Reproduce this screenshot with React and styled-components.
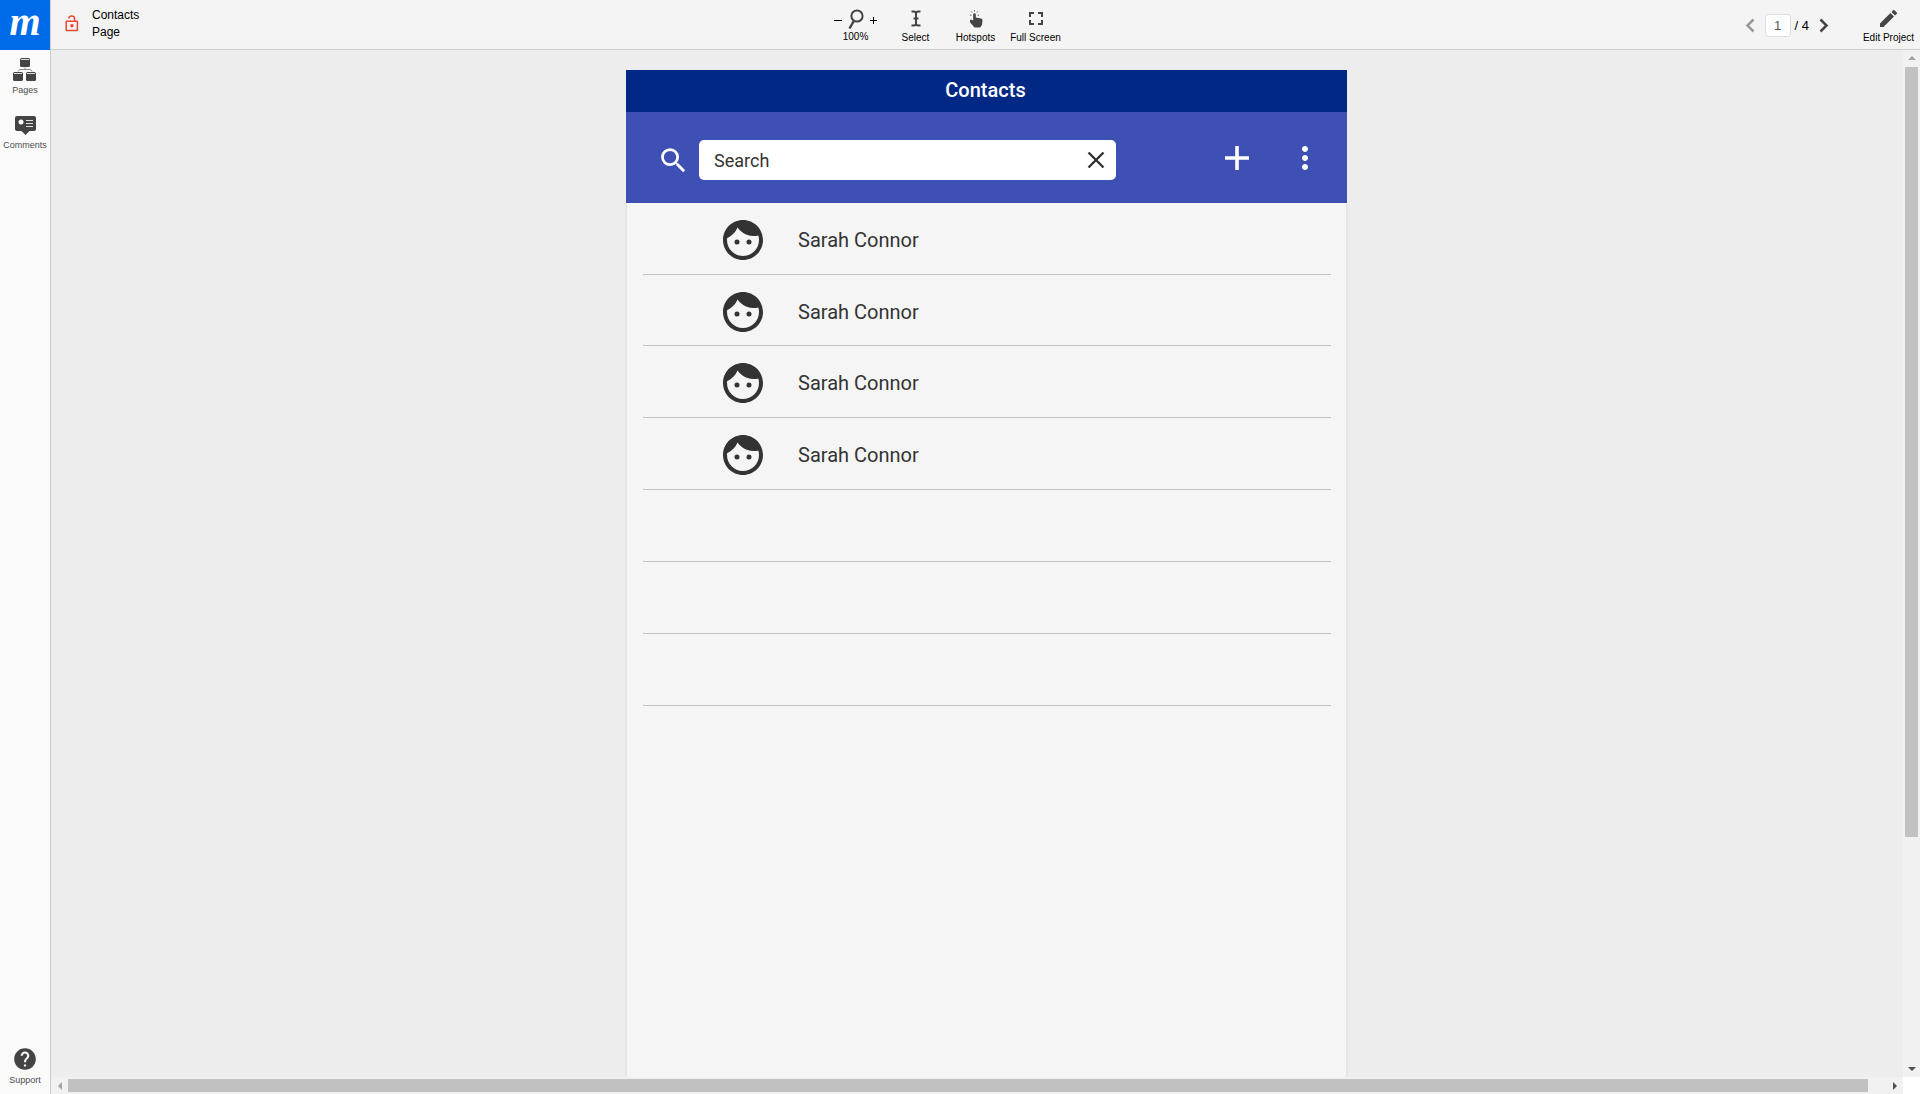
import React from 'react';
import styled, { createGlobalStyle } from 'styled-components';
import { MdFace, MdSearch, MdMoreVert, MdEdit, MdHelp } from 'react-icons/md';

const GlobalStyle = createGlobalStyle`
  * { box-sizing: border-box; }
  html, body, #root { height: 100%; }
  body { margin: 0; overflow: hidden; background: #ededed; font-family: "Liberation Sans", Arial, sans-serif; }
  button, input { font-family: inherit; }
`;

const Shell = styled.div`
  display: grid;
  grid-template-columns: 51px minmax(0, 1fr);
  height: 100vh;
`;

const Sidebar = styled.nav`
  display: flex;
  flex-direction: column;
  background: #fafafa;
  border-right: 1px solid #ccc;
`;

const Logo = styled.a`
  display: flex;
  flex: none;
  align-items: center;
  justify-content: center;
  height: 50px;
  padding-bottom: 6px;
  background: #006be9;
  color: #fff;
  font: italic 700 40px/30px "Liberation Serif", serif;
  text-decoration: none;
`;

const SideButton = styled.button`
  display: flex;
  flex-direction: column;
  align-items: center;
  justify-content: space-between;
  height: ${(p) => p.$height};
  margin: ${(p) => p.$margin};
  padding: 0;
  border: 0;
  background: none;
  color: #4d4d4d;
  font-size: 9px;
  line-height: 12px;
  svg { display: block; color: #444; }
`;

const Main = styled.div`
  display: flex;
  flex-direction: column;
  min-width: 0;
`;

const Header = styled.header`
  display: grid;
  grid-template-columns: 1fr auto 1fr;
  flex: none;
  height: 50px;
  background: #f4f4f4;
  border-bottom: 1px solid #ccc;
  color: #000;
`;

const PageInfo = styled.div`
  display: flex;
  align-items: flex-start;
  gap: 13px;
  padding: 7px 0 0 14px;
  font-size: 12px;
  line-height: 17px;
  svg { margin-top: 8px; }
`;

const Tools = styled.div`
  display: flex;
  align-items: flex-start;
  padding-right: 80px;
`;

const ToolButton = styled.button`
  display: flex;
  flex-direction: column;
  align-items: center;
  justify-content: space-between;
  width: ${(p) => p.$width || '60px'};
  height: 34px;
  margin-top: 10px;
  padding: 0;
  border: 0;
  background: none;
  color: #000;
  font-size: 10px;
  line-height: 12px;
  white-space: nowrap;
  svg { display: block; color: #444; }
`;

const ZoomGroup = styled.div`
  display: grid;
  grid-template-columns: 12px 24px 12px;
  align-items: start;
  justify-content: center;
  justify-items: center;
  width: 60px;
  padding-top: 9px;
  font-size: 10px;
  line-height: 12px;
  svg { display: block; }
`;

const ZoomButton = styled.button`
  height: 22px;
  padding: 0;
  border: 0;
  background: none;
`;

const ZoomValue = styled.output`
  grid-column: 1 / -1;
`;

const Right = styled.div`
  display: flex;
  align-items: flex-start;
  justify-content: flex-end;
  padding-right: 6px;
`;

const Pager = styled.div`
  display: flex;
  align-items: center;
  gap: 4px;
  height: 50px;
  margin-right: 28px;
  font-size: 13px;
`;

const PageInput = styled.input`
  width: 26px;
  height: 23px;
  padding: 0;
  border: 1px solid #ddd;
  border-radius: 3px;
  background: #fff;
  color: #555;
  font-size: 13px;
  text-align: center;
`;

const ArrowButton = styled.button`
  margin: 0 6px;
  padding: 0;
  border: 0;
  background: none;
  color: ${(p) => (p.$muted ? '#999' : '#444')};
  svg { display: block; }
`;

const Workspace = styled.div`
  display: grid;
  flex: 1;
  grid-template-columns: minmax(0, 1fr) 17px;
  grid-template-rows: minmax(0, 1fr) 17px;
  min-height: 0;
`;

const Viewport = styled.main`
  overflow: hidden;
`;

const Stage = styled.div`
  display: flex;
  justify-content: center;
  width: calc(100% + 19px);
  height: 100%;
  padding-top: 20px;
`;

const Screen = styled.section`
  display: flex;
  flex: none;
  flex-direction: column;
  width: 721px;
  font-family: Roboto, sans-serif;
  color: #333;
`;

const ScreenTitle = styled.h1`
  flex: none;
  height: 42px;
  margin: 0;
  padding-right: 2px;
  background: #002884;
  color: #fff;
  font-size: 20px;
  font-weight: 500;
  line-height: 41px;
  text-align: center;
`;

const SearchBar = styled.form`
  display: flex;
  flex: none;
  align-items: center;
  height: 91px;
  padding: 0 24px 0 31px;
  background: #3f50b5;
  color: #fff;
  svg { display: block; }
`;

const SearchGroup = styled.div`
  display: flex;
  align-items: center;
  gap: 9px;
  padding-top: 5px;
`;

const SearchField = styled.div`
  display: flex;
  align-items: center;
  width: 417px;
  height: 40px;
  padding: 0 11px 0 15px;
  border-radius: 5px;
  background: #fff;
`;

const SearchInput = styled.input`
  flex: 1;
  min-width: 0;
  padding: 0;
  border: 0;
  outline: 0;
  background: none;
  color: #333;
  font-size: 18px;
  font-weight: 400;
  &::placeholder { color: #333; opacity: 1; }
`;

const IconButton = styled.button`
  padding: 0;
  border: 0;
  background: none;
  color: ${(p) => p.$color || '#fff'};
`;

const Actions = styled.div`
  display: flex;
  align-items: center;
  gap: 38px;
  margin-left: auto;
`;

const ContactList = styled.ul`
  flex: 1;
  margin: 0 1px;
  padding: 0 15px 0 16px;
  background: #f5f5f5;
  box-shadow: 0 0 3px rgba(0, 0, 0, 0.12);
  list-style: none;
`;

const Contact = styled.li`
  display: flex;
  align-items: center;
  gap: 31px;
  height: 72px;
  padding: 3px 0 0 76px;
  border-bottom: 1px solid #c4c4c4;
  font-size: 20px;
  font-weight: 400;
  &:nth-child(2) { height: 71px; }
`;

const Scrollbar = styled.div`
  display: flex;
  flex-direction: ${(p) => (p.$vertical ? 'column' : 'row')};
  background: #f1f1f1;
`;

const ScrollTrack = styled.div`
  flex: 1;
  padding: ${(p) => (p.$vertical ? '0 2px' : '2px 0')};
`;

const ScrollThumb = styled.div`
  width: ${(p) => p.$width || '100%'};
  height: ${(p) => p.$height || '100%'};
  background: #c1c1c1;
`;

const ScrollArrow = styled.button`
  display: flex;
  flex: none;
  align-items: center;
  justify-content: center;
  width: 17px;
  height: 17px;
  padding: 0;
  border: 0;
  background: none;
  color: ${(p) => (p.$muted ? '#a3a3a3' : '#505050')};
`;

const Corner = styled.div`
  background: #fff;
`;

const contacts = ['Sarah Connor', 'Sarah Connor', 'Sarah Connor', 'Sarah Connor', '', '', ''];

const LockIcon = () => (
  <svg width="14" height="17" viewBox="0 0 14 17" fill="none" stroke="#e8492f" strokeWidth="1.5" aria-hidden="true">
    <rect x="1.2" y="6.2" width="11.2" height="9.4" rx="0.5" />
    <path d="M3.6 3.4C3.9 1.6 5 .9 6.6 .9c1.9 0 3 1.1 3 3V6" />
    <circle cx="6.9" cy="10.8" r="1" fill="#e8492f" />
  </svg>
);

const PagesIcon = () => (
  <svg width="24" height="24" viewBox="1 0 24 24" fill="none" aria-hidden="true">
    <path d="M6 13.5 7.5 11.5h11l1.500 2M13 9.500v2" stroke="#888" />
    <g fill="currentColor">
      <rect x="8" y="0" width="10" height="9" rx="1.500" />
      <rect x="1" y="14" width="10" height="9" rx="1.500" />
      <rect x="14" y="14" width="10" height="9" rx="1.500" />
    </g>
    <path d="M9 1.500h8M2 15.500h8M15 15.500h8" stroke="#ddd" />
  </svg>
);

const CommentsIcon = () => (
  <svg width="21" height="19" viewBox="0 0 21 19" fill="currentColor" aria-hidden="true">
    <path d="M2 0h17a2 2 0 0 1 2 2v11a2 2 0 0 1-2 2h-4.500l-4 4-4-4H2a2 2 0 0 1-2-2V2a2 2 0 0 1 2-2z" />
    <circle cx="6" cy="6" r="2.500" fill="#fafafa" />
    <path d="M11 4.500h7M11 7.500h7M11 10.500h7" stroke="#ddd" />
  </svg>
);

const MagnifierIcon = () => (
  <svg width="16" height="21" viewBox="0 0 16 21" fill="none" stroke="#444" aria-hidden="true">
    <circle cx="9" cy="7" r="5.600" strokeWidth="2" />
    <path d="M5.800 12 1.500 19.500" strokeWidth="2.400" />
  </svg>
);

const SelectIcon = () => (
  <svg width="10" height="17" viewBox="0 0 10 17" fill="none" stroke="currentColor" strokeWidth="2" aria-hidden="true">
    <path d="M.5 1.500H2.500Q5 1.500 5 3.500Q5 1.500 7.500 1.500H9.500M5 3v11M.5 15.500H2.500Q5 15.500 5 13.500Q5 15.500 7.500 15.500H9.500M2.500 8.500h5" />
  </svg>
);

const HandIcon = () => (
  <svg width="14" height="18" viewBox="0 0 14 18" fill="currentColor" aria-hidden="true">
    <path d="M4.200 4.500a1.300 1.300 0 0 1 2.600 0V7.500l5.200 1c1 .2 1.600.9 1.500 1.800l-.5 4.700L11 17.500H5.500L1 12.300V10l1-.6 2.200 1.200z" />
    <path d="M5.500 0v1.500M1.900 1.200l1.200 1.300M9.100 1.200 7.900 2.500M1 5.200h1.500M8.500 5.200H10" stroke="currentColor" strokeWidth=".8" />
  </svg>
);

const FullscreenIcon = () => (
  <svg width="14" height="16" viewBox="0 0 14 16" fill="none" stroke="currentColor" strokeWidth="2" aria-hidden="true">
    <path d="M1 7V3h4M9 3h4v4M13 10v4H9M5 14H1v-4" />
  </svg>
);

const Chevron = ({ next }) => (
  <svg width="10" height="15" viewBox="0 0 10 15" fill="none" stroke="currentColor" strokeWidth="2.500" aria-hidden="true">
    <path d={next ? 'M1.500 1.500 7.500 7.500l-6 6' : 'M8.500 1.500l-6 6 6 6'} />
  </svg>
);

const PlusIcon = () => (
  <svg width="24" height="24" viewBox="0 0 24 24" stroke="currentColor" strokeWidth="3.6" aria-hidden="true">
    <path d="M12 0v24M0 12h24" />
  </svg>
);

const CloseIcon = () => (
  <svg width="18" height="18" viewBox="0 0 18 18" stroke="currentColor" strokeWidth="2.400" aria-hidden="true">
    <path d="M1.500 1.500l15 15M16.500 1.500l-15 15" />
  </svg>
);

const arrows = {
  up: 'M0 5 4 1l4 4z',
  down: 'M0 2l4 4 4-4z',
  left: 'M6 0 2 4l4 4z',
  right: 'M2 0l4 4-4 4z',
};

const Arrow = ({ to }) => (
  <svg width="8" height="8" viewBox="0 0 8 8" fill="currentColor" aria-hidden="true">
    <path d={arrows[to]} />
  </svg>
);

export default function App() {
  return (
    <>
      <GlobalStyle />
      <Shell>
        <Sidebar>
          <Logo href="#home">m</Logo>
          <SideButton type="button" $height="38px" $margin="8px 0 0">
            <PagesIcon />
            Pages
          </SideButton>
          <SideButton type="button" $height="35px" $margin="20px 0 0">
            <CommentsIcon />
            Comments
          </SideButton>
          <SideButton type="button" $height="40px" $margin="auto 0 8px">
            <MdHelp size={26} />
            Support
          </SideButton>
        </Sidebar>
        <Main>
          <Header>
            <PageInfo>
              <LockIcon />
              <div>
                Contacts
                <br />
                Page
              </div>
            </PageInfo>
            <Tools>
              <ZoomGroup>
                <ZoomButton type="button" aria-label="Zoom out">
                  <svg width="8" height="8" stroke="#000"><path d="M0 4.500h8" /></svg>
                </ZoomButton>
                <MagnifierIcon />
                <ZoomButton type="button" aria-label="Zoom in">
                  <svg width="8" height="8" stroke="#000"><path d="M0 4.500h7M3.500 1v7" /></svg>
                </ZoomButton>
                <ZoomValue>100%</ZoomValue>
              </ZoomGroup>
              <ToolButton type="button">
                <SelectIcon />
                Select
              </ToolButton>
              <ToolButton type="button">
                <HandIcon />
                Hotspots
              </ToolButton>
              <ToolButton type="button">
                <FullscreenIcon />
                Full Screen
              </ToolButton>
            </Tools>
            <Right>
              <Pager>
                <ArrowButton type="button" $muted aria-label="Previous page"><Chevron /></ArrowButton>
                <PageInput aria-label="Page number" defaultValue="1" />
                <span>/ 4</span>
                <ArrowButton type="button" aria-label="Next page"><Chevron next /></ArrowButton>
              </Pager>
              <ToolButton type="button" $width="51px">
                <MdEdit size={17} viewBox="3 3 18 18" />
                Edit Project
              </ToolButton>
            </Right>
          </Header>
          <Workspace>
            <Viewport>
              <Stage>
                <Screen>
                  <ScreenTitle>Contacts</ScreenTitle>
                  <SearchBar>
                    <SearchGroup>
                      <label htmlFor="contact-search" aria-label="Search contacts">
                        <MdSearch size={33} />
                      </label>
                      <SearchField>
                        <SearchInput id="contact-search" placeholder="Search" />
                        <IconButton type="button" $color="#333" aria-label="Clear search"><CloseIcon /></IconButton>
                      </SearchField>
                    </SearchGroup>
                    <Actions>
                      <IconButton type="button" aria-label="Add contact"><PlusIcon /></IconButton>
                      <IconButton type="button" aria-label="More options"><MdMoreVert size={36} /></IconButton>
                    </Actions>
                  </SearchBar>
                  <ContactList>
                    {contacts.map((name, i) => (
                      <Contact key={i}>
                        {name && <MdFace size={48} />}
                        {name}
                      </Contact>
                    ))}
                  </ContactList>
                </Screen>
              </Stage>
            </Viewport>
            <Scrollbar $vertical>
              <ScrollArrow type="button" $muted aria-label="Scroll up"><Arrow to="up" /></ScrollArrow>
              <ScrollTrack $vertical><ScrollThumb $height="77.5%" /></ScrollTrack>
              <ScrollArrow type="button" aria-label="Scroll down"><Arrow to="down" /></ScrollArrow>
            </Scrollbar>
            <Scrollbar>
              <ScrollArrow type="button" $muted aria-label="Scroll left"><Arrow to="left" /></ScrollArrow>
              <ScrollTrack><ScrollThumb $width="99%" /></ScrollTrack>
              <ScrollArrow type="button" aria-label="Scroll right"><Arrow to="right" /></ScrollArrow>
            </Scrollbar>
            <Corner />
          </Workspace>
        </Main>
      </Shell>
    </>
  );
}
